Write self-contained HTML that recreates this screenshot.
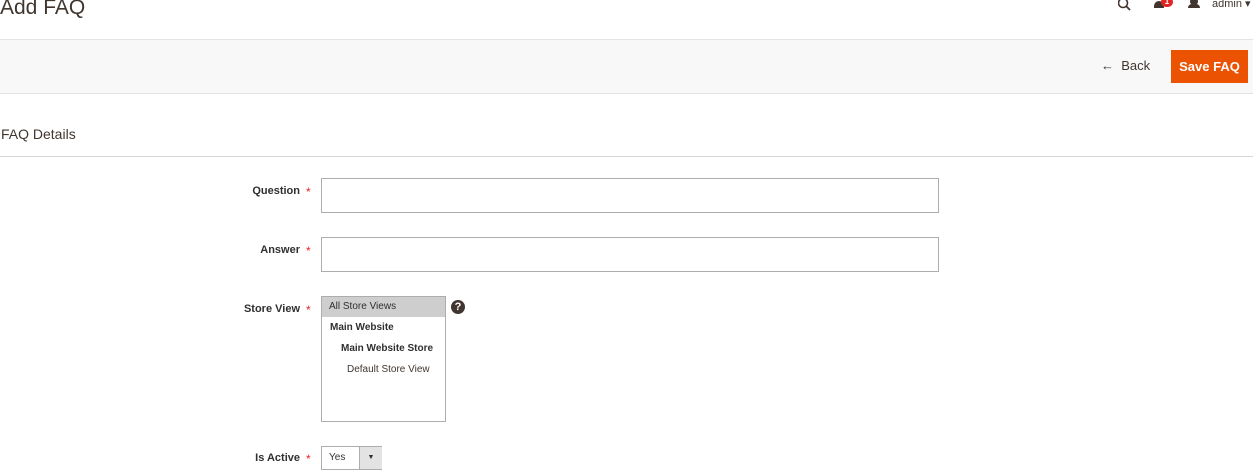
<!DOCTYPE html>
<html><head><style>
body{margin:0;width:1253px;height:476px;overflow:hidden;background:#fff;font-family:"Liberation Sans",sans-serif;color:#303030;position:relative}
.a{position:absolute}
.lbl{position:absolute;right:953px;font-size:11px;font-weight:bold;color:#303030}
.star{position:absolute;left:306px;color:#e22626;font-size:12px}
.inp{position:absolute;left:321px;width:616px;height:33px;border:1px solid #adadad;background:#fff}
</style></head><body>
<div class="a" style="left:0;top:-4px;font-size:21px;color:#41362f">Add FAQ</div>
<svg class="a" style="left:1118px;top:0" width="14" height="12"><circle cx="5" cy="3" r="4.5" fill="none" stroke="#41362f" stroke-width="1.6"/><line x1="8.5" y1="6.5" x2="12" y2="10" stroke="#41362f" stroke-width="1.8"/></svg>
<div class="a" style="left:1154px;top:1px;width:10px;height:7px;background:#41362f;border-radius:5px 5px 0 0"></div>
<div class="a" style="left:1161px;top:-3px;width:12px;height:10px;border-radius:6px;background:#e22626;color:#fff;font-size:8px;text-align:center;line-height:10px;font-weight:bold">1</div>
<div class="a" style="left:1190px;top:-2px;width:8px;height:7px;border-radius:4px;background:#41362f"></div>
<div class="a" style="left:1188px;top:4px;width:12px;height:4px;background:#41362f;border-radius:4px 4px 0 0"></div>
<div class="a" style="left:1212px;top:-3px;font-size:11px;color:#41362f">admin ▾</div>
<div class="a" style="left:0;top:39px;width:1253px;height:53px;background:#f8f8f8;border-top:1px solid #e3e3e3;border-bottom:1px solid #e3e3e3"></div>
<div class="a" style="left:1101px;top:58px;font-size:13px;color:#41362f">← &nbsp;Back</div>
<div class="a" style="left:1171px;top:50px;width:77px;height:33px;background:#eb5202;color:#fff;font-size:13px;font-weight:bold;text-align:center;line-height:33px">Save FAQ</div>
<div class="a" style="left:1px;top:126px;font-size:14px;color:#41362f">FAQ Details</div>
<div class="a" style="left:0;top:156px;width:1253px;height:1px;background:#d6d6d6"></div>
<div class="lbl" style="top:185px">Question</div><div class="star" style="top:185px">*</div>
<div class="inp" style="top:178px"></div>
<div class="lbl" style="top:244px">Answer</div><div class="star" style="top:244px">*</div>
<div class="inp" style="top:237px"></div>
<div class="lbl" style="top:303px">Store View</div><div class="star" style="top:303px">*</div>
<div class="a" style="left:321px;top:296px;width:123px;height:124px;border:1px solid #adadad;font-size:10px">
<div style="background:#cecece;height:20px;line-height:20px;padding-left:7px">All Store Views</div>
<div style="font-weight:bold;padding-left:8px;line-height:21px">Main Website</div>
<div style="font-weight:bold;padding-left:19px;line-height:21px">Main Website Store</div>
<div style="padding-left:25px;line-height:21px;color:#41362f">Default Store View</div></div>
<div class="a" style="left:451px;top:300px;width:14px;height:14px;border-radius:7px;background:#41362f;color:#fff;font-size:11px;font-weight:bold;text-align:center;line-height:14px">?</div>
<div class="lbl" style="top:452px">Is Active</div><div class="star" style="top:452px">*</div>
<div class="a" style="left:321px;top:446px;width:59px;height:22px;border:1px solid #adadad;font-size:10px;line-height:22px"><span style="padding-left:7px">Yes</span><div class="a" style="left:37px;top:0;width:22px;height:22px;background:#e3e3e3;border-left:1px solid #adadad;text-align:center;font-size:7px">▼</div></div>
</body></html>
